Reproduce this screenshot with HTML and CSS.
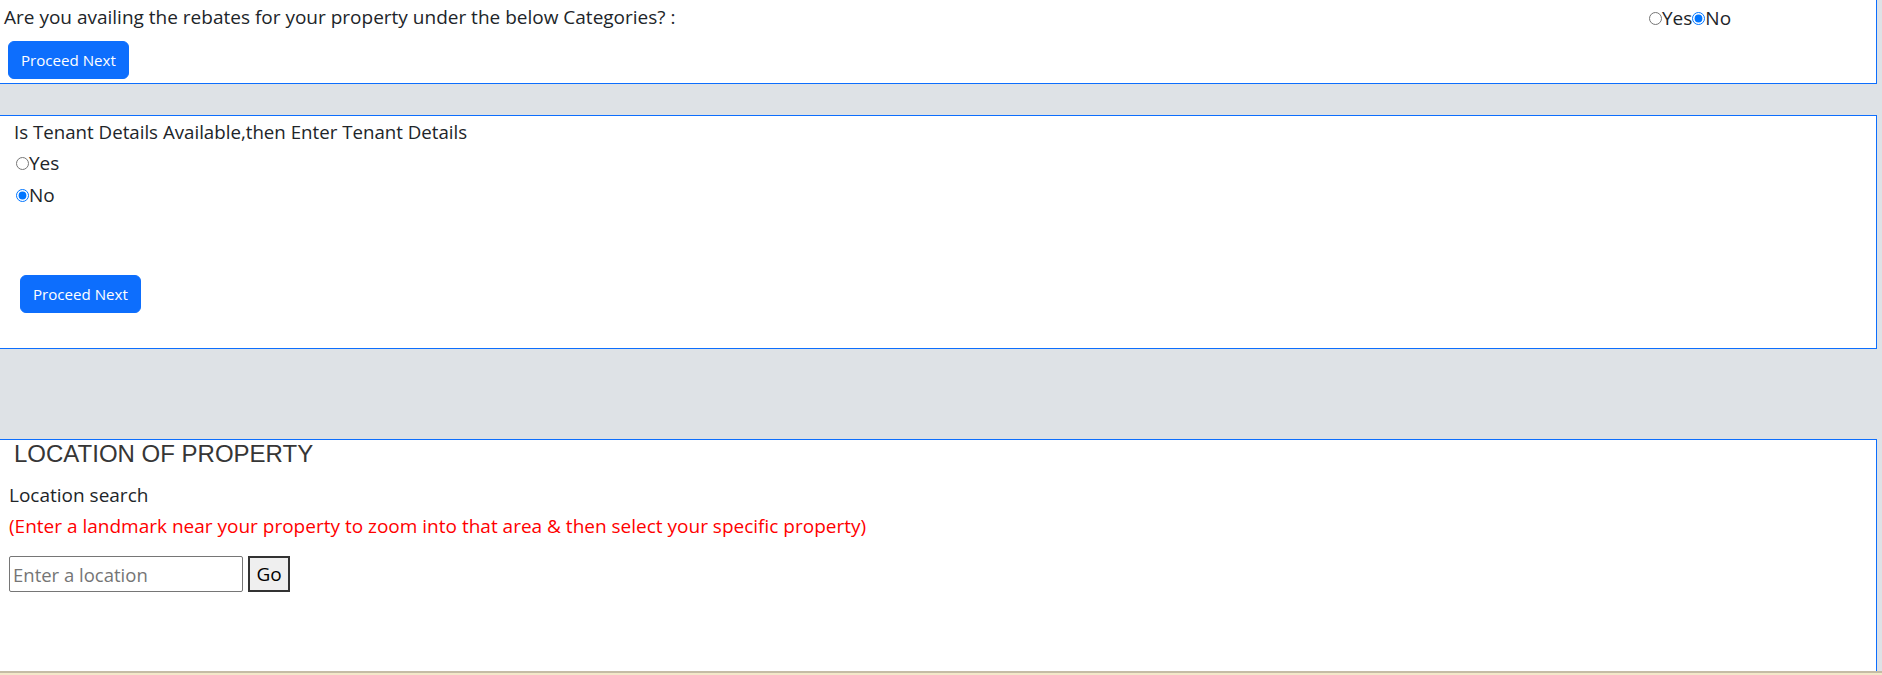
FILE: index.html
```html
<!DOCTYPE html>
<html lang="en">
<head>
<meta charset="utf-8">
<title>Property details</title>
<link rel="stylesheet" href="styles.css">
</head>
<body>
<div class="page">
  <section class="panel panel-rebate">
    <div class="question-row">
      <span class="question">Are you availing the rebates for your property under the below Categories? :</span>
      <div class="opts">
        <label class="opt"><input type="radio" name="rebate">Yes</label>
        <label class="opt"><input type="radio" name="rebate" checked>No</label>
      </div>
    </div>
    <button class="btn-primary btn-rebate" type="button">Proceed Next</button>
  </section>

  <section class="panel panel-tenant">
    <div class="tenant-title">Is Tenant Details Available,then Enter Tenant Details</div>
    <label class="opt opt-row"><input type="radio" name="tenant">Yes</label>
    <label class="opt opt-row"><input type="radio" name="tenant" checked>No</label>
    <button class="btn-primary btn-tenant" type="button">Proceed Next</button>
  </section>

  <section class="panel panel-location">
    <h3 class="loc-title">LOCATION OF PROPERTY</h3>
    <div class="loc-label">Location search</div>
    <div class="loc-hint">(Enter a landmark near your property to zoom into that area &amp; then select your specific property)</div>
    <div class="search-row">
      <input class="search-input" type="text" placeholder="Enter a location">
      <button class="go-btn" type="button">Go</button>
    </div>
  </section>
</div>
<footer class="footer-strip"></footer>
</body>
</html>
```

FILE: styles.css
```css
html, body {
  margin: 0;
  padding: 0;
  height: 675px;
  overflow: hidden;
}

body {
  background: #dee2e6;
  color: #212529;
  font-family: "Open Sans", "Noto Sans", sans-serif;
  font-size: 19px;
}

.page {
  margin-right: 5px;
}

.panel {
  background: #ffffff;
  border: 1px solid #0d6efd;
  border-left: 0;
  box-sizing: border-box;
}

/* ---------- panel 1 ---------- */
.panel-rebate {
  border-top: 0;
  padding: 2px 0 4px 4px;
}

.question-row {
  display: flex;
  align-items: center;
  line-height: 31px;
  height: 31px;
}

.question {
  flex: 1;
  white-space: nowrap;
}

.opts {
  width: 227px;
  display: flex;
  align-items: center;
  padding-top: 2px;
}

.opt {
  display: flex;
  align-items: center;
  cursor: pointer;
}

.opt input {
  margin: 0;
  width: 13px;
  height: 13px;
}

.btn-primary {
  display: block;
  height: 38px;
  padding: 0 12px;
  background: #0d6efd;
  border: 1px solid #0d6efd;
  border-radius: 6px;
  color: #ffffff;
  font-family: "Open Sans", "Noto Sans", sans-serif;
  font-size: 15.1px;
  line-height: 36px;
  cursor: pointer;
}

.btn-rebate {
  margin: 8px 0 0 4px;
}

/* ---------- panel 2 ---------- */
.panel-tenant {
  margin-top: 31px;
  padding: 0 0 35px 14px;
}

.tenant-title {
  font-size: 18.7px;
  line-height: 31px;
}

.opt-row {
  line-height: 32px;
  height: 32px;
  padding-left: 2px;
}

.btn-tenant {
  margin: 64px 0 0 6px;
}

/* ---------- panel 3 ---------- */
.panel-location {
  margin-top: 90px;
  border-bottom: 0;
  background: #ffffff;
  padding: 0 0 79px 9px;
}

.loc-title {
  margin: 0 0 0 5px;
  font-family: "Liberation Sans", Arial, sans-serif;
  font-size: 24px;
  font-weight: normal;
  line-height: 28px;
  color: #363636;
}

.loc-label {
  margin-top: 12px;
  line-height: 31px;
}

.loc-hint {
  line-height: 31px;
  color: #ff0000;
}

.search-row {
  margin-top: 14px;
  display: flex;
  align-items: center;
  gap: 5px;
}

.search-input {
  box-sizing: border-box;
  width: 234px;
  height: 36px;
  margin: 0;
  padding: 0 3px;
  border: 1px solid #767676;
  border-radius: 2px;
  font-family: "Open Sans", "Noto Sans", sans-serif;
  font-size: 18.5px;
  color: #212529;
  background: #ffffff;
}

.search-input::placeholder {
  color: #757575;
}

.go-btn {
  box-sizing: border-box;
  width: 42px;
  height: 36px;
  margin: 0;
  padding: 0;
  background: #efefef;
  border: 2px solid #333333;
  border-radius: 0;
  color: #000000;
  font-family: "Open Sans", "Noto Sans", sans-serif;
  font-size: 19px;
  cursor: pointer;
}

/* ---------- bottom strip ---------- */
.footer-strip {
  height: 2px;
  border-top: 2px solid #c5bca6;
  background: #f3e8c9;
}
```
